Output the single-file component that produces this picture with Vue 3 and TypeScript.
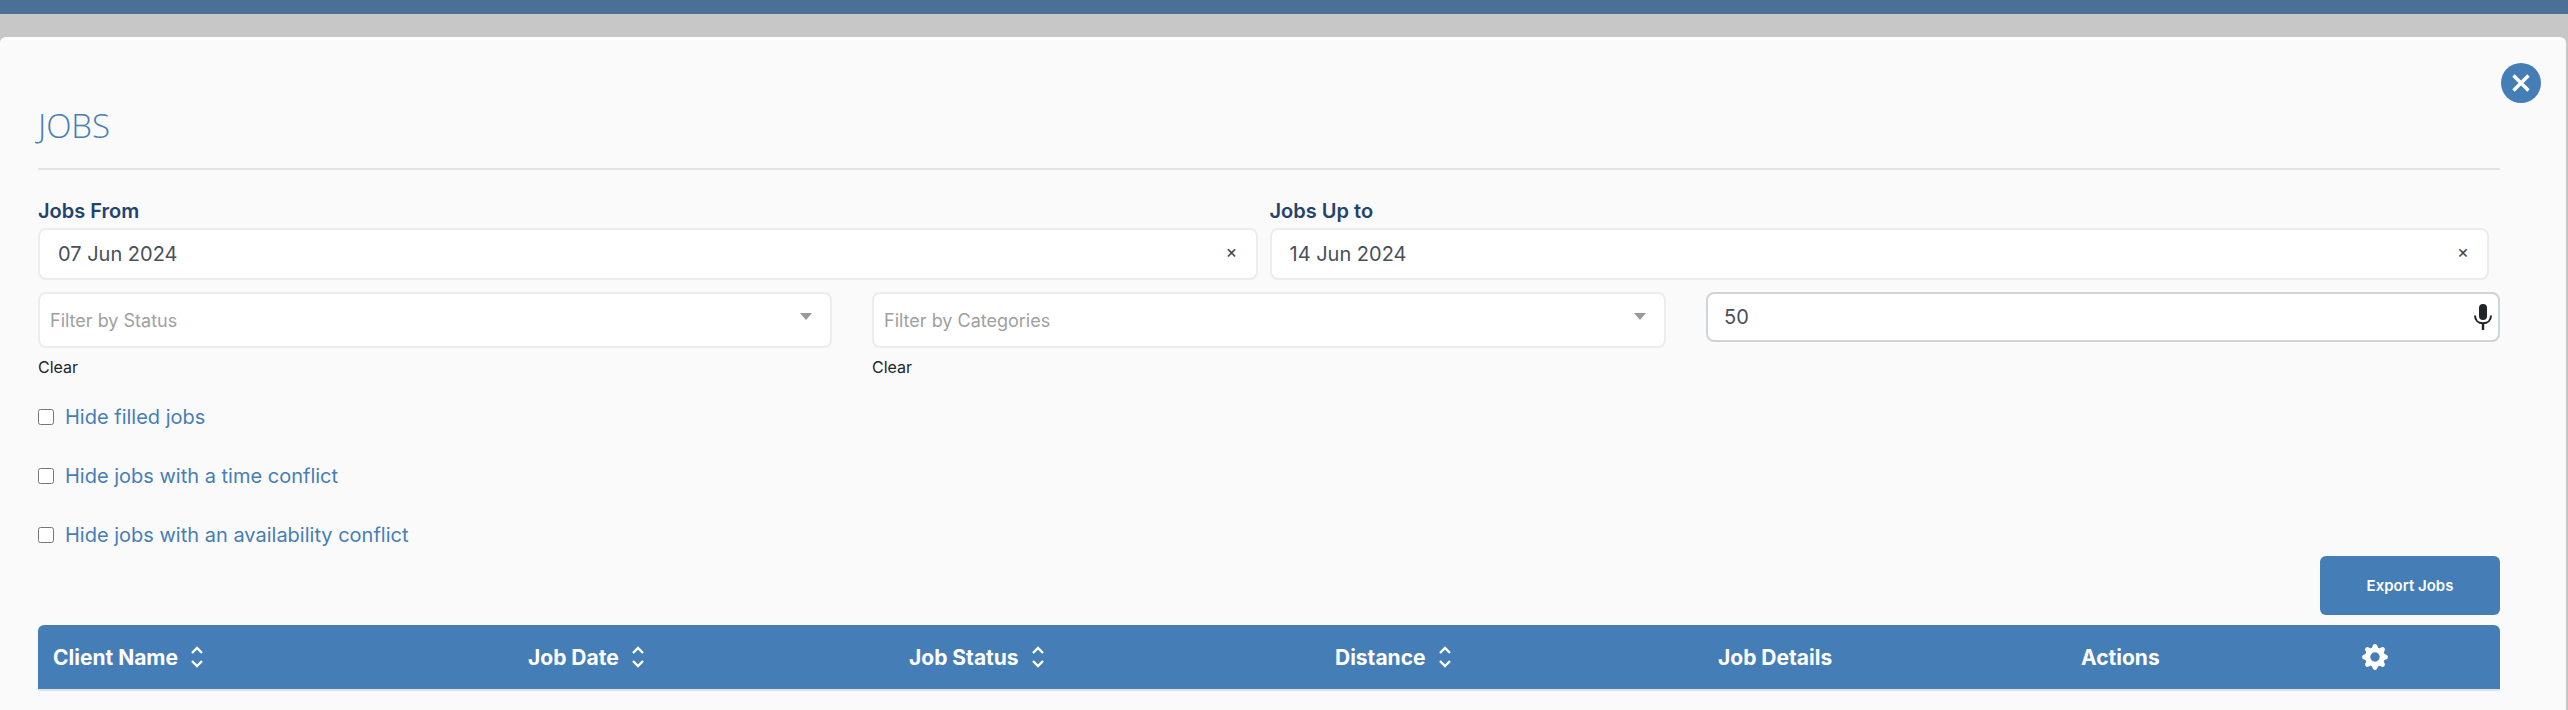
<script setup lang="ts">
import { ref } from 'vue'

const fromDate = ref('07 Jun 2024')
const toDate = ref('14 Jun 2024')
const checks = ['Hide filled jobs', 'Hide jobs with a time conflict', 'Hide jobs with an availability conflict']
const columns = [
  { label: 'Client Name', sort: true },
  { label: 'Job Date', sort: true },
  { label: 'Job Status', sort: true },
  { label: 'Distance', sort: true },
  { label: 'Job Details', sort: false },
  { label: 'Actions', sort: false },
]
</script>

<template>
  <div class="page">
    <div class="topbar"></div>
    <div class="modal">
      <button class="close" aria-label="Close">
        <svg width="22" height="22" viewBox="0 0 22 22"><path d="M3.5 3.5l15 15M18.5 3.5l-15 15" stroke="#fff" stroke-width="3.4" /></svg>
      </button>
      <h2 class="title">JOBS</h2>

      <div class="dates">
        <div class="date">
          <label>Jobs From</label>
          <div class="date-box"><span>{{ fromDate }}</span><i>×</i></div>
        </div>
        <div class="date">
          <label>Jobs Up to</label>
          <div class="date-box"><span>{{ toDate }}</span><i>×</i></div>
        </div>
      </div>

      <div class="filters">
        <div class="filter">
          <div class="select"><span>Filter by Status</span><b></b></div>
          <a>Clear</a>
        </div>
        <div class="filter">
          <div class="select"><span>Filter by Categories</span><b></b></div>
          <a>Clear</a>
        </div>
        <div class="count">
          <span>50</span>
          <svg width="20" height="26" viewBox="0 0 20 26">
            <rect x="6" y="0" width="8" height="16" rx="4" fill="#212529" />
            <path d="M2 11.5c0 5 3.6 7.8 8 7.8s8-2.800 8-7.800" fill="none" stroke="#212529" stroke-width="2" />
            <path d="M10 19v7" stroke="#212529" stroke-width="2.400" />
          </svg>
        </div>
      </div>

      <div class="checks">
        <label v-for="c in checks" :key="c" class="check"><input type="checkbox" /><span>{{ c }}</span></label>
      </div>

      <div class="actions"><button class="export">Export Jobs</button></div>

      <div class="thead">
        <div v-for="col in columns" :key="col.label" class="th">
          {{ col.label }}
          <svg v-if="col.sort" width="14" height="24" viewBox="0 0 14 24">
            <path d="M2 8l5-5 5 5M2 16l5 5 5-5" fill="none" stroke="#fff" stroke-width="2.400" />
          </svg>
        </div>
        <div class="th">
          <svg width="26" height="26" viewBox="0 0 16 16">
            <path fill="#fff" d="M9.400 1.100c-.4-1.400-2.400-1.400-2.800 0l-.1.300a1.500 1.500 0 0 1-2.100.9l-.3-.2c-1.300-.7-2.700.7-2 2l.2.300a1.500 1.500 0 0 1-.9 2.100l-.3.100c-1.400.4-1.400 2.400 0 2.800l.3.100a1.500 1.500 0 0 1 .9 2.100l-.2.300c-.7 1.300.7 2.700 2 2l.3-.2a1.500 1.500 0 0 1 2.100.9l.1.300c.4 1.400 2.400 1.400 2.800 0l.1-.3a1.500 1.500 0 0 1 2.100-.9l.3.200c1.300.7 2.700-.7 2-2l-.2-.3a1.500 1.500 0 0 1 .9-2.100l.3-.1c1.400-.4 1.400-2.400 0-2.800l-.3-.1a1.500 1.500 0 0 1-.9-2.100l.2-.3c.7-1.300-.7-2.700-2-2l-.3.200a1.500 1.500 0 0 1-2.100-.9zM8 10.900a2.900 2.900 0 1 1 0-5.800 2.900 2.900 0 0 1 0 5.800z" />
          </svg>
        </div>
      </div>
    </div>
  </div>
</template>

<style>
html, body { margin: 0; background: #c7c7c7; overflow: hidden; }
</style>

<style scoped>
.page {
  height: 710px;
  display: flex;
  flex-direction: column;
  font-family: Inter, "Open Sans", sans-serif;
  color: #212529;
}
.topbar { height: 14px; background: #4a7096; }
.modal {
  position: relative;
  margin: 23px 2px 0 0;
  flex: 1;
  box-sizing: border-box;
  padding: 0 66px 0 38px;
  background: #fafafa;
  border-top: 3px solid #fff;
  border-radius: 6px 6px 0 0;
}
.close {
  position: absolute;
  top: 23px;
  right: 25px;
  width: 40px;
  height: 40px;
  padding: 0;
  border: 0;
  border-radius: 50%;
  background: #457eb6;
  display: flex;
  align-items: center;
  justify-content: center;
}
.title {
  margin: 0;
  padding-top: 66px;
  height: 62px;
  box-sizing: content-box;
  border-bottom: 2px solid #e3e3e3;
  font: 300 33px/40px "Open Sans", sans-serif;
  color: #457eb6;
}
.dates { display: flex; gap: 12px; margin-top: 24px; padding-right: 11px; }
.date { flex: 1; }
.date label {
  display: block;
  font-size: 20px;
  line-height: 34px;
  font-weight: 600;
  color: #23426e;
}
.date-box {
  height: 52px;
  box-sizing: border-box;
  padding: 0 18px;
  display: flex;
  align-items: center;
  justify-content: space-between;
  background: #fff;
  border: 2px solid #ececec;
  border-radius: 8px;
  font-size: 20px;
  color: #495057;
}
.date-box i { font-style: normal; font-size: 18px; color: #444; margin-top: -6px; }
.filters { display: flex; align-items: flex-start; margin-top: 12px; }
.filter { width: 794px; margin-right: 40px; }
.select {
  height: 56px;
  box-sizing: border-box;
  padding: 0 18px 0 10px;
  display: flex;
  align-items: center;
  justify-content: space-between;
  background: #fff;
  border: 2px solid #ececec;
  border-radius: 8px;
  font-size: 18px;
  color: #a0a0a0;
}
.select b {
  width: 0;
  height: 0;
  margin-top: -8px;
  border-left: 6px solid transparent;
  border-right: 6px solid transparent;
  border-top: 7px solid #999;
}
.filter a { display: block; margin-top: 8px; font-size: 16px; line-height: 22px; color: #212529; }
.count {
  flex: 1;
  height: 50px;
  box-sizing: border-box;
  padding: 0 5px 0 16px;
  display: flex;
  align-items: center;
  justify-content: space-between;
  background: #fff;
  border: 2px solid #ced4da;
  border-radius: 8px;
  font-size: 20px;
  color: #495057;
}
.checks { display: flex; flex-direction: column; gap: 29px; margin-top: 24px; }
.check {
  display: flex;
  align-items: center;
  gap: 11px;
  height: 30px;
  font-size: 20px;
  color: #457eb6;
}
.check input { width: 16px; height: 16px; margin: 0; }
.actions { display: flex; justify-content: flex-end; margin-top: 6px; }
.export {
  width: 180px;
  height: 59px;
  border: 0;
  border-radius: 6px;
  background: #457eb6;
  color: #fff;
  font: 600 15px Inter, sans-serif;
}
.thead {
  display: grid;
  grid-template-columns: 475px 381px 426px 383px 363px 281px 155px;
  height: 66px;
  box-sizing: border-box;
  margin-top: 10px;
  background: #457eb6;
  border-bottom: 2px solid #dee2e6;
  border-radius: 6px 6px 0 0;
}
.th {
  display: flex;
  align-items: center;
  gap: 12px;
  padding-left: 15px;
  font-size: 21px;
  font-weight: 700;
  color: #fff;
}
</style>
